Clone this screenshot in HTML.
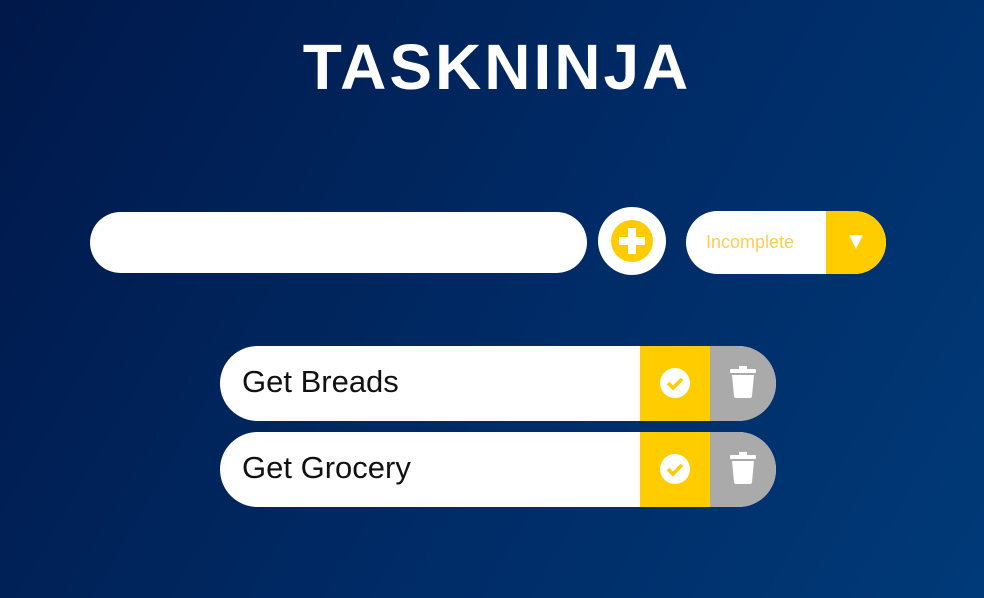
<!DOCTYPE html>
<html><head><style>
body{margin:0;width:984px;height:598px;overflow:hidden;background:linear-gradient(120deg,#00184a 0%,#002b66 55%,#003a78 100%);font-family:"Liberation Sans",sans-serif;position:relative}
h1{position:absolute;top:30px;left:0;width:994px;margin:0;text-align:center;color:#fff;font-size:64px;font-weight:bold;letter-spacing:3px}
.inp{position:absolute;left:90px;top:212px;width:497px;height:61px;background:#fff;border-radius:31px}
.add{position:absolute;left:598px;top:207px;width:68px;height:68px;border-radius:50%;background:#fff}
.add .c{position:absolute;left:13px;top:13px;width:42px;height:42px;border-radius:50%;background:#fc0}
.add .h{position:absolute;left:8px;top:17px;width:26px;height:8px;background:#fff}
.add .v{position:absolute;left:17px;top:8px;width:8px;height:26px;background:#fff}
.sel{position:absolute;left:686px;top:211px;width:200px;height:63px;background:#fff;border-radius:32px;overflow:hidden}
.sel span{position:absolute;left:20px;top:21px;color:#fc5;font-size:18px}
.sel .b{position:absolute;left:140px;top:0;width:60px;height:63px;background:#fc0}
.sel .t{position:absolute;left:23px;top:24px;width:0;height:0;border-left:7px solid transparent;border-right:7px solid transparent;border-top:14px solid #fff}
.row{position:absolute;left:220px;width:556px;height:75px;background:#fff;border-radius:38px;overflow:hidden}
.row span{position:absolute;left:22px;top:18px;font-size:31px;color:#111}
.row .y{position:absolute;left:420px;top:0;width:70px;height:75px;background:#fc0}
.row .g{position:absolute;left:490px;top:0;width:66px;height:75px;background:#aaa}
.row svg{position:absolute}
</style></head><body>
<h1>TASKNINJA</h1>
<div class="inp"></div>
<div class="add"><div class="c"><div class="h"></div><div class="v"></div></div></div>
<div class="sel"><span>Incomplete</span><div class="b"><div class="t"></div></div></div>
<div class="row" style="top:346px"><span>Get Breads</span><div class="y"><svg style="left:20px;top:22px" width="30" height="30" viewBox="0 0 30 30"><circle cx="15" cy="15" r="15" fill="#fff"/><path d="M8 15l5 5 9-9" stroke="#fc0" stroke-width="3.5" fill="none"/></svg></div><div class="g"><svg style="left:20px;top:20px" width="26" height="32" viewBox="0 0 26 32"><rect x="0" y="3" width="26" height="4" rx="1" fill="#fff"/><rect x="9" y="0" width="8" height="4" fill="#fff"/><path d="M2 9h22l-2 21q0 2-2 2H6q-2 0-2-2z" fill="#fff"/></svg></div></div>
<div class="row" style="top:432px"><span>Get Grocery</span><div class="y"><svg style="left:20px;top:22px" width="30" height="30" viewBox="0 0 30 30"><circle cx="15" cy="15" r="15" fill="#fff"/><path d="M8 15l5 5 9-9" stroke="#fc0" stroke-width="3.5" fill="none"/></svg></div><div class="g"><svg style="left:20px;top:20px" width="26" height="32" viewBox="0 0 26 32"><rect x="0" y="3" width="26" height="4" rx="1" fill="#fff"/><rect x="9" y="0" width="8" height="4" fill="#fff"/><path d="M2 9h22l-2 21q0 2-2 2H6q-2 0-2-2z" fill="#fff"/></svg></div></div>
</body></html>
